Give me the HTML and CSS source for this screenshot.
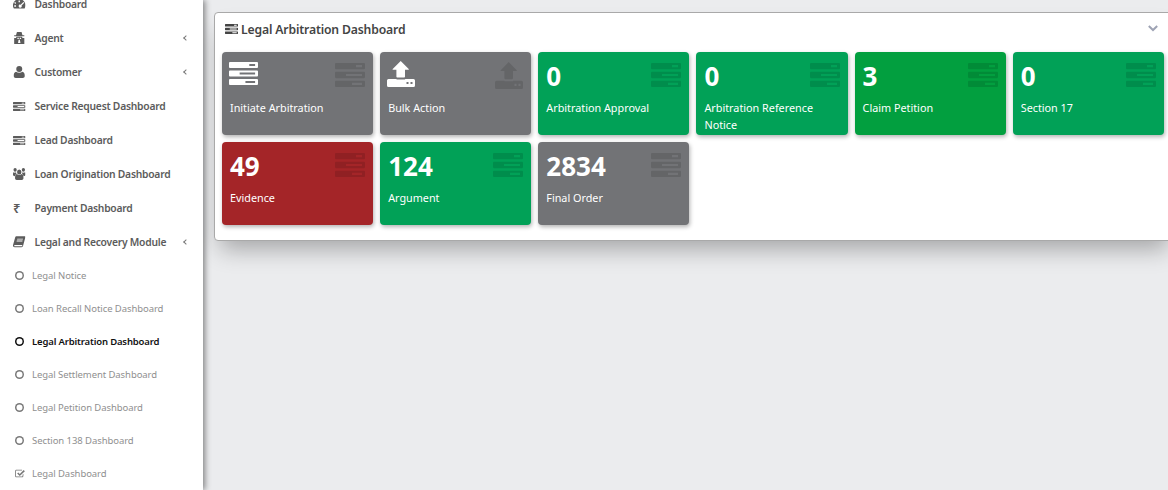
FILE: index.html
```html
<!DOCTYPE html>
<html lang="en">
<head>
    <meta charset="UTF-8">
    <meta name="viewport" content="width=device-width, initial-scale=1.0">
    <title>Legal Arbitration Dashboard</title>
    <link rel="stylesheet" href="styles.css">
</head>
<body>
    <!-- shared icons -->
    <svg class="icon-defs" aria-hidden="true">
        <symbol id="i-server" viewBox="0 0 30 23" preserveAspectRatio="none">
            <path fill-rule="evenodd" d="M1 0h28a1 1 0 0 1 1 1v4a1 1 0 0 1-1 1H1a1 1 0 0 1-1-1V1a1 1 0 0 1 1-1zM21 2v2h6V2zM1 8.500h28a1 1 0 0 1 1 1v4a1 1 0 0 1-1 1H1a1 1 0 0 1-1-1v-4a1 1 0 0 1 1-1zM11 10.500v2h16v-2zM1 17h28a1 1 0 0 1 1 1v4a1 1 0 0 1-1 1H1a1 1 0 0 1-1-1v-4a1 1 0 0 1 1-1zM17 19v2h10v-2z"/>
        </symbol>
        <symbol id="i-upload" viewBox="0 0 28 26" preserveAspectRatio="none">
            <path fill-rule="evenodd" d="M13.700 0l8 8a.4.4 0 0 1-.3.700H18v7a.8.8 0 0 1-.8.800H10.200a.8.8 0 0 1-.8-.8v-7H6a.4.4 0 0 1-.3-.7zM1.500 18h8v.5h8.600V18h8.400A1.500 1.500 0 0 1 28 19.500v5A1.500 1.500 0 0 1 26.500 26h-25A1.500 1.500 0 0 1 0 24.500v-5A1.500 1.500 0 0 1 1.500 18zM19.500 21v2h2v-2zM23.500 21v2h2v-2z"/>
        </symbol>
        <symbol id="i-gauge" viewBox="0 0 14 11">
            <path fill-rule="evenodd" d="M7 0a7 7 0 0 1 6 10.600H1A7 7 0 0 1 7 0zM6.200 1.600v2h1.600v-2zM2.300 3.200l-1 1 1.300 1.300 1-1zM11.700 3.200L8.600 6.300a1.700 1.700 0 1 0 1 1l3.100-3.100zM1.400 7v1.500h2V7z"/>
        </symbol>
        <symbol id="i-secret" viewBox="0 0 11 13">
            <path fill-rule="evenodd" d="M3 0h5l1 3.500H11v1H0v-1h2zM2.500 5.200h6l.5 1.300H11V13H0V6.500h2zM3.500 6.300v1.200h1.500V6.300zM6 6.300v1.200h1.500V6.300zM4.800 8.500L4.200 12h2.600l-.6-3.500z"/>
        </symbol>
        <symbol id="i-user" viewBox="0 0 11 12">
            <path d="M5.500 0a3 3 0 1 1 0 6 3 3 0 0 1 0-6zM2.300 5.800c1.700 1.300 4.700 1.300 6.400 0 1.500.3 2.300 1.700 2.300 4.200 0 1.300-.8 2-2 2H2c-1.200 0-2-.7-2-2 0-2.500.8-3.900 2.300-4.200z"/>
        </symbol>
        <symbol id="i-users" viewBox="0 0 13 11" preserveAspectRatio="none">
            <path d="M6.500 1.300a2.300 2.300 0 1 1 0 4.600 2.300 2.300 0 0 1 0-4.600zM2.200 0a1.700 1.700 0 1 1 0 3.400 1.700 1.700 0 0 1 0-3.400zM10.800 0a1.700 1.700 0 1 1 0 3.400 1.700 1.700 0 0 1 0-3.400zM4 5.500c1.400 1.100 3.600 1.100 5 0 1.200.2 1.900 1.500 1.900 3.700 0 1.200-.7 1.800-1.800 1.800H3.900c-1.100 0-1.800-.6-1.800-1.800C2.100 7 2.800 5.700 4 5.500zM.3 3.800c.7.500 2 .6 2.900.2 0 .6.100 1 .4 1.400C2.800 5.700 2.200 6.500 2 7.500 .7 7.500 0 7 0 6c0-1 .1-1.700.3-2.200zM12.700 3.800c-.7.500-2 .6-2.900.2 0 .6-.1 1-.4 1.400.8.300 1.400 1.100 1.600 2.100 1.300 0 2-.5 2-1.500 0-1-.1-1.700-.3-2.200z"/>
        </symbol>
        <symbol id="i-book" viewBox="0 0 13 12">
            <path fill-rule="evenodd" d="M3.500 0H12c.8 0 1 .6.800 1.200L10.500 10c-.2.800-.8 1.500-1.700 1.500H1.800C.6 11.500 0 10.600 0 9.700c0-.3 0-.7.200-1L2.300 1C2.500.4 2.900 0 3.500 0zM4.500 2.500L4.200 3.500h6l.3-1zM4 4.500L3.700 5.500h6L10 4.500zM2 9c-.5 0-.8.400-.8.800s.3.700.8.700h6.800c.4 0 .7-.3.8-.7l.1-.8z"/>
        </symbol>
        <symbol id="i-check" viewBox="0 0 13 12">
            <path d="M1.800 1h7.400v1.100H1.800a.7.700 0 0 0-.7.700v6.400c0 .4.300.7.700.7h7.400c.4 0 .7-.3.700-.7V7.500L11 6.400v2.800c0 1-.8 1.800-1.800 1.800H1.800C.8 11 0 10.200 0 9.200V2.800C0 1.800.8 1 1.800 1zM11.400 1.400L13 3 6.200 9.400 2.700 6l1.500-1.500 2 2z"/>
        </symbol>
    </svg>

    <aside class="sidebar">
        <ul class="nav">
            <li class="nav-item"><svg class="nav-icon"><use href="#i-gauge"/></svg><span>Dashboard</span></li>
            <li class="nav-item"><svg class="nav-icon"><use href="#i-secret"/></svg><span>Agent</span><i class="caret"></i></li>
            <li class="nav-item"><svg class="nav-icon"><use href="#i-user"/></svg><span>Customer</span><i class="caret"></i></li>
            <li class="nav-item"><svg class="nav-icon short"><use href="#i-server"/></svg><span>Service Request Dashboard</span></li>
            <li class="nav-item"><svg class="nav-icon short"><use href="#i-server"/></svg><span>Lead Dashboard</span></li>
            <li class="nav-item"><svg class="nav-icon"><use href="#i-users"/></svg><span>Loan Origination Dashboard</span></li>
            <li class="nav-item"><span class="nav-icon rupee">₹</span><span>Payment Dashboard</span></li>
            <li class="nav-item"><svg class="nav-icon"><use href="#i-book"/></svg><span>Legal and Recovery Module</span><i class="caret"></i></li>
        </ul>
        <ul class="subnav">
            <li class="sub-item"><i class="ring"></i><span>Legal Notice</span></li>
            <li class="sub-item"><i class="ring"></i><span>Loan Recall Notice Dashboard</span></li>
            <li class="sub-item active"><i class="ring"></i><span>Legal Arbitration Dashboard</span></li>
            <li class="sub-item"><i class="ring"></i><span>Legal Settlement Dashboard</span></li>
            <li class="sub-item"><i class="ring"></i><span>Legal Petition Dashboard</span></li>
            <li class="sub-item"><i class="ring"></i><span>Section 138 Dashboard</span></li>
            <li class="sub-item"><svg class="sub-check"><use href="#i-check"/></svg><span>Legal Dashboard</span></li>
        </ul>
    </aside>

    <main class="content">
        <section class="card">
            <header class="card-head">
                <h1 class="card-title"><svg class="title-icon"><use href="#i-server"/></svg>Legal Arbitration Dashboard</h1>
                <svg class="collapse" viewBox="0 0 10 7"><path d="M.8 1l4.200 4 4.200-4" fill="none" stroke="currentColor" stroke-width="2"/></svg>
            </header>
            <div class="tiles">
                <a class="tile gray">
                    <svg class="tile-bg"><use href="#i-server"/></svg>
                    <div class="tile-top glyph-top"><svg class="tile-glyph"><use href="#i-server"/></svg></div>
                    <p>Initiate Arbitration</p>
                </a>
                <a class="tile gray">
                    <svg class="tile-bg upload"><use href="#i-upload"/></svg>
                    <div class="tile-top glyph-top up"><svg class="tile-glyph upload"><use href="#i-upload"/></svg></div>
                    <p>Bulk Action</p>
                </a>
                <a class="tile green">
                    <svg class="tile-bg"><use href="#i-server"/></svg>
                    <div class="tile-top">0</div>
                    <p>Arbitration Approval</p>
                </a>
                <a class="tile green">
                    <svg class="tile-bg"><use href="#i-server"/></svg>
                    <div class="tile-top">0</div>
                    <p>Arbitration Reference Notice</p>
                </a>
                <a class="tile green-alt">
                    <svg class="tile-bg"><use href="#i-server"/></svg>
                    <div class="tile-top">3</div>
                    <p>Claim Petition</p>
                </a>
                <a class="tile green">
                    <svg class="tile-bg"><use href="#i-server"/></svg>
                    <div class="tile-top">0</div>
                    <p>Section 17</p>
                </a>
                <a class="tile red">
                    <svg class="tile-bg"><use href="#i-server"/></svg>
                    <div class="tile-top">49</div>
                    <p>Evidence</p>
                </a>
                <a class="tile green">
                    <svg class="tile-bg"><use href="#i-server"/></svg>
                    <div class="tile-top">124</div>
                    <p>Argument</p>
                </a>
                <a class="tile gray">
                    <svg class="tile-bg"><use href="#i-server"/></svg>
                    <div class="tile-top">2834</div>
                    <p>Final Order</p>
                </a>
            </div>
        </section>
    </main>
</body>
</html>
```

FILE: styles.css
```css
* {
    margin: 0;
    padding: 0;
    box-sizing: border-box;
}

html, body {
    height: 100%;
    overflow: hidden;
}

body {
    display: flex;
    background-color: #ebecee;
    font-family: "Noto Sans", sans-serif;
    color: #4f4f4f;
}

.icon-defs {
    display: none;
}

ul {
    list-style: none;
}

/* Sidebar */
.sidebar {
    flex: 0 0 203px;
    height: 100%;
    overflow: hidden;
    background-color: #fff;
    box-shadow: 2px 0 6px rgba(0, 0, 0, 0.45);
    position: relative;
    z-index: 1;
}

.nav {
    margin-top: -13px;
}

.nav-item {
    display: flex;
    align-items: center;
    height: 34px;
    padding-left: 13px;
    font-size: 10.300px;
    font-weight: 600;
    letter-spacing: -0.24px;
    color: #5c5c5c;
}

.nav-icon {
    flex: 0 0 12.500px;
    width: 12.500px;
    height: 12px;
    margin-right: 9px;
    fill: currentColor;
}

.nav-icon.short {
    height: 9px;
}

.rupee {
    font-size: 13px;
    line-height: 12px;
}

.caret {
    width: 4px;
    height: 4px;
    margin-left: auto;
    margin-right: 15px;
    border-left: 1px solid #777;
    border-bottom: 1px solid #777;
    transform: rotate(45deg);
}

.sub-item {
    display: flex;
    align-items: center;
    height: 33px;
    padding-left: 15px;
    font-size: 9.500px;
    letter-spacing: -0.07px;
    color: #8f8f8f;
}

.sub-item.active {
    color: #111;
    font-weight: 600;
    letter-spacing: -0.15px;
}

.ring {
    flex: 0 0 9px;
    width: 9px;
    height: 9px;
    margin-right: 8px;
    border-radius: 50%;
    box-shadow: inset 0 0 0 1.500px #7a7a7a;
}

.active .ring {
    box-shadow: inset 0 0 0 1.500px #111;
}

.sub-check {
    flex: 0 0 10px;
    width: 10px;
    height: 9px;
    margin-right: 7px;
    fill: #777;
}

/* Main card */
.content {
    flex: 1;
    min-width: 0;
    padding: 12px 0 0 11px;
}

.card {
    width: 960px;
    height: 229px;
    padding: 0 7px;
    background-color: #fff;
    border: 1px solid #a9a9a9;
    border-radius: 4px;
    box-shadow: 0 14px 22px -6px rgba(0, 0, 0, 0.3);
}

.card-head {
    display: flex;
    align-items: center;
    height: 39px;
    padding: 0 8px 7px 3px;
}

.card-title {
    display: flex;
    align-items: center;
    font-size: 12.200px;
    font-weight: 600;
    letter-spacing: -0.15px;
    color: #444;
}

.title-icon {
    width: 13px;
    height: 10px;
    margin-right: 3px;
    fill: currentColor;
}

.collapse {
    width: 10px;
    height: 7px;
    margin-left: auto;
    margin-bottom: 2px;
    color: #9ea3b4;
}

.tiles {
    display: grid;
    grid-template-columns: repeat(6, 151.150px);
    grid-auto-rows: 83px;
    gap: 7px;
}

.tile {
    position: relative;
    padding: 6px 8px;
    border-radius: 4px;
    color: #fff;
    box-shadow: 1px 2px 4px rgba(0, 0, 0, 0.3);
}

.tile p {
    margin-top: 5px;
    font-size: 10.800px;
    line-height: 17px;
}

.tile-top {
    height: 36px;
    font-size: 26px;
    font-weight: 700;
    line-height: 36px;
}

.glyph-top {
    padding-top: 4px;
}

.glyph-top.up {
    padding-top: 3px;
}

.tile-glyph {
    display: block;
    width: 29px;
    height: 23px;
    margin-left: -1px;
    fill: #fff;
}

.tile-glyph.upload {
    width: 28px;
    height: 26px;
}

.tile-bg {
    position: absolute;
    top: 11px;
    right: 8px;
    width: 30px;
    height: 24px;
    fill: rgba(0, 0, 0, 0.12);
}

.tile-bg.upload {
    top: 10px;
    width: 28px;
    height: 27px;
}

.gray {
    background-color: #727376;
}

.green {
    background-color: #01a157;
}

.green-alt {
    background-color: #029f3f;
}

.red {
    background-color: #a42528;
}
```
